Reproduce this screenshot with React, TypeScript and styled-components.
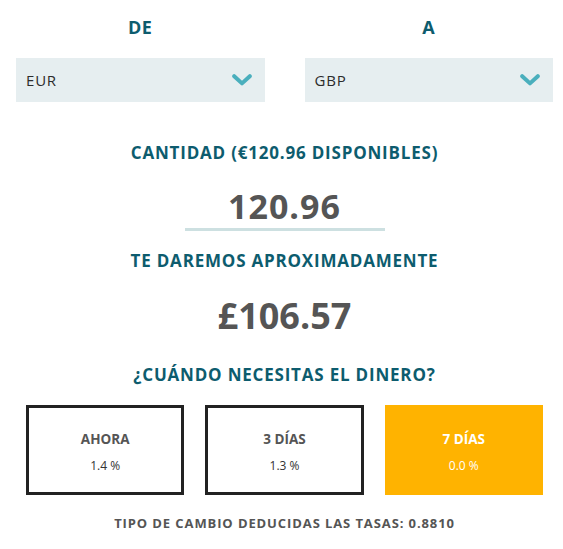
import React, { useState } from "react";
import styled, { createGlobalStyle } from "styled-components";

type Option = {
  label: string;
  fee: string;
};

const OPTIONS: Option[] = [
  { label: "AHORA", fee: "1.4 %" },
  { label: "3 DÍAS", fee: "1.3 %" },
  { label: "7 DÍAS", fee: "0.0 %" },
];

const Chevron = () => (
  <svg width="20" height="12" viewBox="0 0 20 12">
    <path
      d="M2.2 2.2 L10 9.4 L17.8 2.2"
      fill="none"
      stroke="#4aafbd"
      strokeWidth="4"
      strokeLinecap="round"
      strokeLinejoin="round"
    />
  </svg>
);

const App = () => {
  const [selected, setSelected] = useState<number>(2);
  const [amount, setAmount] = useState<string>("120.96");

  return (
    <>
      <GlobalStyle />
      <Page>
        <CurrencyRow>
          <div>
            <Label>DE</Label>
            <Select>
              <span>EUR</span>
              <Chevron />
            </Select>
          </div>
          <div>
            <Label>A</Label>
            <Select>
              <span>GBP</span>
              <Chevron />
            </Select>
          </div>
        </CurrencyRow>

        <Heading $top={41}>CANTIDAD (€120.96 DISPONIBLES)</Heading>
        <AmountInput
          value={amount}
          onChange={(e) => setAmount(e.target.value)}
        />

        <Heading $top={20}>TE DAREMOS APROXIMADAMENTE</Heading>
        <Result>£106.57</Result>

        <Heading $top={23}>¿CUÁNDO NECESITAS EL DINERO?</Heading>
        <Options>
          {OPTIONS.map((opt, i) => (
            <OptionBox
              key={opt.label}
              $active={selected === i}
              onClick={() => setSelected(i)}
            >
              <OptionTitle>{opt.label}</OptionTitle>
              <OptionFee $active={selected === i}>{opt.fee}</OptionFee>
            </OptionBox>
          ))}
        </Options>

        <Footer>TIPO DE CAMBIO DEDUCIDAS LAS TASAS: 0.8810</Footer>
      </Page>
    </>
  );
};

const GlobalStyle = createGlobalStyle`
  body {
    margin: 0;
    background: #fff;
    font-family: "Open Sans", "Liberation Sans", sans-serif;
  }
`;

const Page = styled.div`
  width: 537px;
  margin-left: 16px;
  display: flex;
  flex-direction: column;
  align-items: center;
`;

const CurrencyRow = styled.div`
  width: 100%;
  display: grid;
  grid-template-columns: 1fr 1fr;
  column-gap: 40px;
`;

const Label = styled.div`
  padding-top: 15px;
  margin-bottom: 19px;
  line-height: 24px;
  font-size: 18px;
  font-weight: 700;
  color: #0d5c6e;
  text-align: center;
  letter-spacing: 0.5px;
`;

const Select = styled.div`
  height: 44px;
  box-sizing: border-box;
  padding: 0 13px 0 10px;
  background: #e6eef0;
  display: flex;
  align-items: center;
  justify-content: space-between;
  font-size: 15px;
  color: #2b2b2b;
  letter-spacing: 0.8px;
  cursor: pointer;
`;

const Heading = styled.div<{ $top: number }>`
  margin-top: ${(p) => p.$top}px;
  line-height: 20px;
  font-size: 17px;
  font-weight: 700;
  color: #0d5c6e;
  letter-spacing: 0.8px;
  text-align: center;
`;

const AmountInput = styled.input`
  margin-top: 21px;
  width: 200px;
  height: 44px;
  padding: 0;
  border: none;
  border-bottom: 3px solid #cde0e1;
  outline: none;
  background: transparent;
  text-align: center;
  font-family: inherit;
  font-size: 34px;
  font-weight: 700;
  color: #555;
  letter-spacing: 1px;
`;

const Result = styled.div`
  margin-top: 19px;
  line-height: 52px;
  font-size: 36px;
  font-weight: 700;
  color: #555;
`;

const Options = styled.div`
  margin-top: 20px;
  width: 517px;
  display: grid;
  grid-template-columns: repeat(3, 1fr);
  column-gap: 21px;
`;

const OptionBox = styled.div<{ $active: boolean }>`
  height: 90px;
  box-sizing: border-box;
  border: 3px solid ${(p) => (p.$active ? "#ffb300" : "#222")};
  background: ${(p) => (p.$active ? "#ffb300" : "#fff")};
  color: ${(p) => (p.$active ? "#fff" : "#555")};
  display: flex;
  flex-direction: column;
  align-items: center;
  padding-top: 21px;
  cursor: pointer;
`;

const OptionTitle = styled.div`
  line-height: 20px;
  font-size: 13.5px;
  font-weight: 700;
`;

const OptionFee = styled.div<{ $active: boolean }>`
  margin-top: 9px;
  line-height: 16px;
  font-size: 12px;
  font-weight: 400;
  color: ${(p) => (p.$active ? "#fff" : "#333")};
`;

const Footer = styled.div`
  margin-top: 19px;
  line-height: 18px;
  font-size: 13px;
  font-weight: 700;
  color: #555;
  letter-spacing: 0.9px;
  text-align: center;
`;

export default App;
